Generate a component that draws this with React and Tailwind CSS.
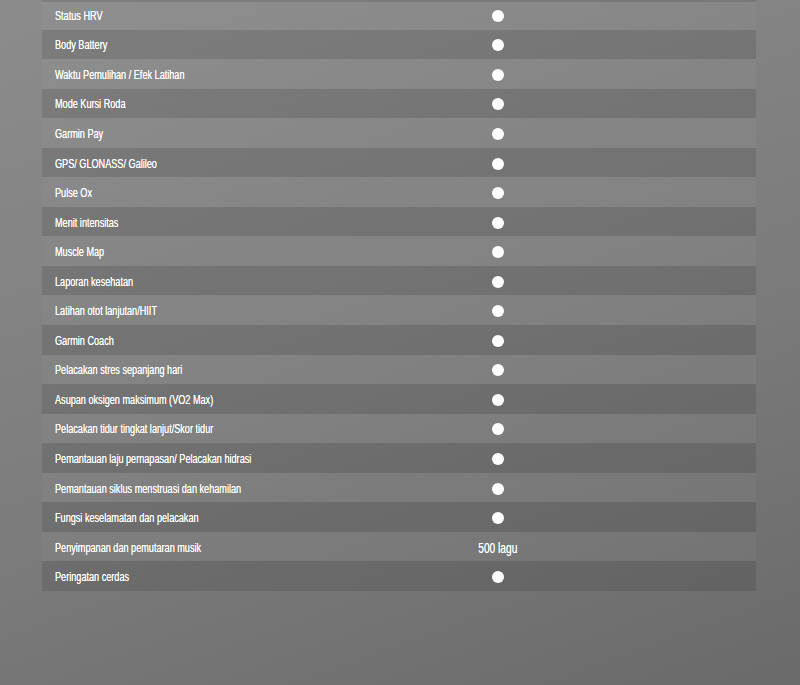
import React from "react";

const rows = [
  ["Status HRV", "dot"],
  ["Body Battery", "dot"],
  ["Waktu Pemulihan / Efek Latihan", "dot"],
  ["Mode Kursi Roda", "dot"],
  ["Garmin Pay", "dot"],
  ["GPS/ GLONASS/ Galileo", "dot"],
  ["Pulse Ox", "dot"],
  ["Menit intensitas", "dot"],
  ["Muscle Map", "dot"],
  ["Laporan kesehatan", "dot"],
  ["Latihan otot lanjutan/HIIT", "dot"],
  ["Garmin Coach", "dot"],
  ["Pelacakan stres sepanjang hari", "dot"],
  ["Asupan oksigen maksimum (VO2 Max)", "dot"],
  ["Pelacakan tidur tingkat lanjut/Skor tidur", "dot"],
  ["Pemantauan laju pernapasan/ Pelacakan hidrasi", "dot"],
  ["Pemantauan siklus menstruasi dan kehamilan", "dot"],
  ["Fungsi keselamatan dan pelacakan", "dot"],
  ["Penyimpanan dan pemutaran musik", "500 lagu"],
  ["Peringatan cerdas", "dot"],
];

export default function App() {
  return (
    <div className="w-[800px] h-[685px] overflow-hidden bg-[linear-gradient(160deg,#8c8c8c_0%,#7c7c7c_55%,#6a6a6a_100%)] font-['Liberation_Sans',Arial,sans-serif] text-white">
      <div className="ml-[42px] w-[714px] shadow-[inset_0_2px_0_rgba(0,0,0,0.12)]">
        {rows.map(([label, val], i) => (
          <div
            key={label}
            className={`flex items-center h-[29.55px] ${i % 2 === 1 ? "bg-black/10" : "bg-white/[0.03]"}`}
          >
            <div className="w-[380px] pl-[13px] leading-none">
              <span className="inline-block origin-left scale-x-[0.73] text-[12.5px] whitespace-nowrap [text-shadow:0_0_0.5px_rgba(255,255,255,0.9)]">
                {label}
              </span>
            </div>
            <div className="w-[152px] flex justify-center">
              {val === "dot" ? (
                <span className="block mt-[2px] w-[12px] h-[12px] rounded-full bg-white" />
              ) : (
                <span className="inline-block mt-[2px] origin-center scale-x-[0.68] text-[15px] leading-none whitespace-nowrap [text-shadow:0_0_0.5px_rgba(255,255,255,0.9)]">
                  {val}
                </span>
              )}
            </div>
          </div>
        ))}
      </div>
    </div>
  );
}
